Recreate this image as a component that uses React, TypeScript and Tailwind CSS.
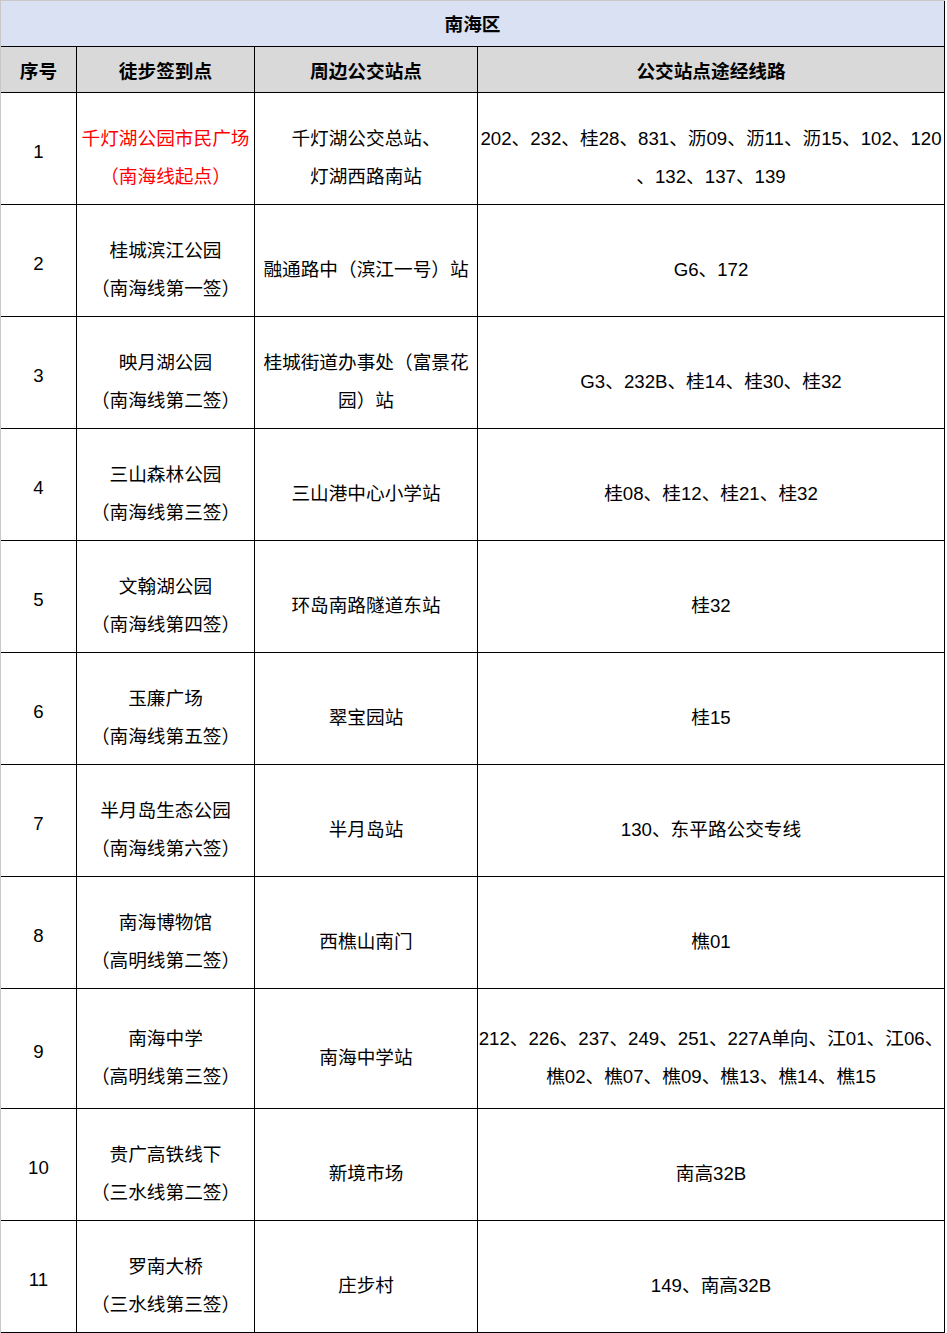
import React from "react";

type Row = {
  no: string;
  name: string[];
  red?: boolean;
  stop: string[];
  lines: string[];
  h?: string;
};

const rows: Row[] = [
  { no: "1", name: ["千灯湖公园市民广场", "（南海线起点）"], red: true, stop: ["千灯湖公交总站、", "灯湖西路南站"], lines: ["202、232、桂28、831、沥09、沥11、沥15、102、120", "、132、137、139"] },
  { no: "2", name: ["桂城滨江公园", "（南海线第一签）"], stop: ["融通路中（滨江一号）站"], lines: ["G6、172"] },
  { no: "3", name: ["映月湖公园", "（南海线第二签）"], stop: ["桂城街道办事处（富景花", "园）站"], lines: ["G3、232B、桂14、桂30、桂32"] },
  { no: "4", name: ["三山森林公园", "（南海线第三签）"], stop: ["三山港中心小学站"], lines: ["桂08、桂12、桂21、桂32"] },
  { no: "5", name: ["文翰湖公园", "（南海线第四签）"], stop: ["环岛南路隧道东站"], lines: ["桂32"] },
  { no: "6", name: ["玉廉广场", "（南海线第五签）"], stop: ["翠宝园站"], lines: ["桂15"] },
  { no: "7", name: ["半月岛生态公园", "（南海线第六签）"], stop: ["半月岛站"], lines: ["130、东平路公交专线"] },
  { no: "8", name: ["南海博物馆", "（高明线第二签）"], stop: ["西樵山南门"], lines: ["樵01"] },
  { no: "9", name: ["南海中学", "（高明线第三签）"], stop: ["南海中学站"], lines: ["212、226、237、249、251、227A单向、江01、江06、", "樵02、樵07、樵09、樵13、樵14、樵15"], h: "tall" },
  { no: "10", name: ["贵广高铁线下", "（三水线第二签）"], stop: ["新境市场"], lines: ["南高32B"] },
  { no: "11", name: ["罗南大桥", "（三水线第三签）"], stop: ["庄步村"], lines: ["149、南高32B"] },
];

function Lines({ items, red }: { items: string[]; red?: boolean }) {
  return (
    <div className={`flex flex-col items-center leading-[38px] whitespace-nowrap ${red ? "text-[#ff0000]" : "text-black"}`}>
      {items.map((t, i) => (
        <span key={i}>{t}</span>
      ))}
    </div>
  );
}

export default function App() {
  return (
    <div
      className="w-[947px] h-[1333px] bg-white text-black text-[18.67px]"
      style={{ fontFamily: '"Liberation Sans", "Noto Sans CJK SC", sans-serif' }}
    >
      <div className="w-[945px] border-l border-t border-[#c8c8c8]">
        <div className="h-[46px] bg-[#d9e1f2] border-b border-r border-b-black border-r-black flex items-center justify-center pt-[2px] font-bold">
          南海区
        </div>
        <div className="flex h-[46px] bg-[#d9d9d9] font-bold">
          <div className="w-[76px] border-r border-b border-black flex items-center justify-center pt-[4px]">序号</div>
          <div className="w-[178px] border-r border-b border-black flex items-center justify-center pt-[4px]">徒步签到点</div>
          <div className="w-[223px] border-r border-b border-black flex items-center justify-center pt-[4px]">周边公交站点</div>
          <div className="w-[467px] border-r border-b border-black flex items-center justify-center pt-[4px]">公交站点途经线路</div>
        </div>
        {rows.map((r) => (
          <div key={r.no} className={`flex ${r.h === "tall" ? "h-[120px]" : "h-[112px]"}`}>
            <div className="w-[76px] border-r border-b border-black flex items-center justify-center pt-[7px]">{r.no}</div>
            <div className="w-[178px] border-r border-b border-black flex items-center justify-center pt-[18px]">
              <Lines items={r.name} red={r.red} />
            </div>
            <div className="w-[223px] border-r border-b border-black flex items-center justify-center pt-[18px]">
              <Lines items={r.stop} />
            </div>
            <div className="w-[467px] border-r border-b border-black flex items-center justify-center pt-[18px]">
              <Lines items={r.lines} />
            </div>
          </div>
        ))}
      </div>
    </div>
  );
}
